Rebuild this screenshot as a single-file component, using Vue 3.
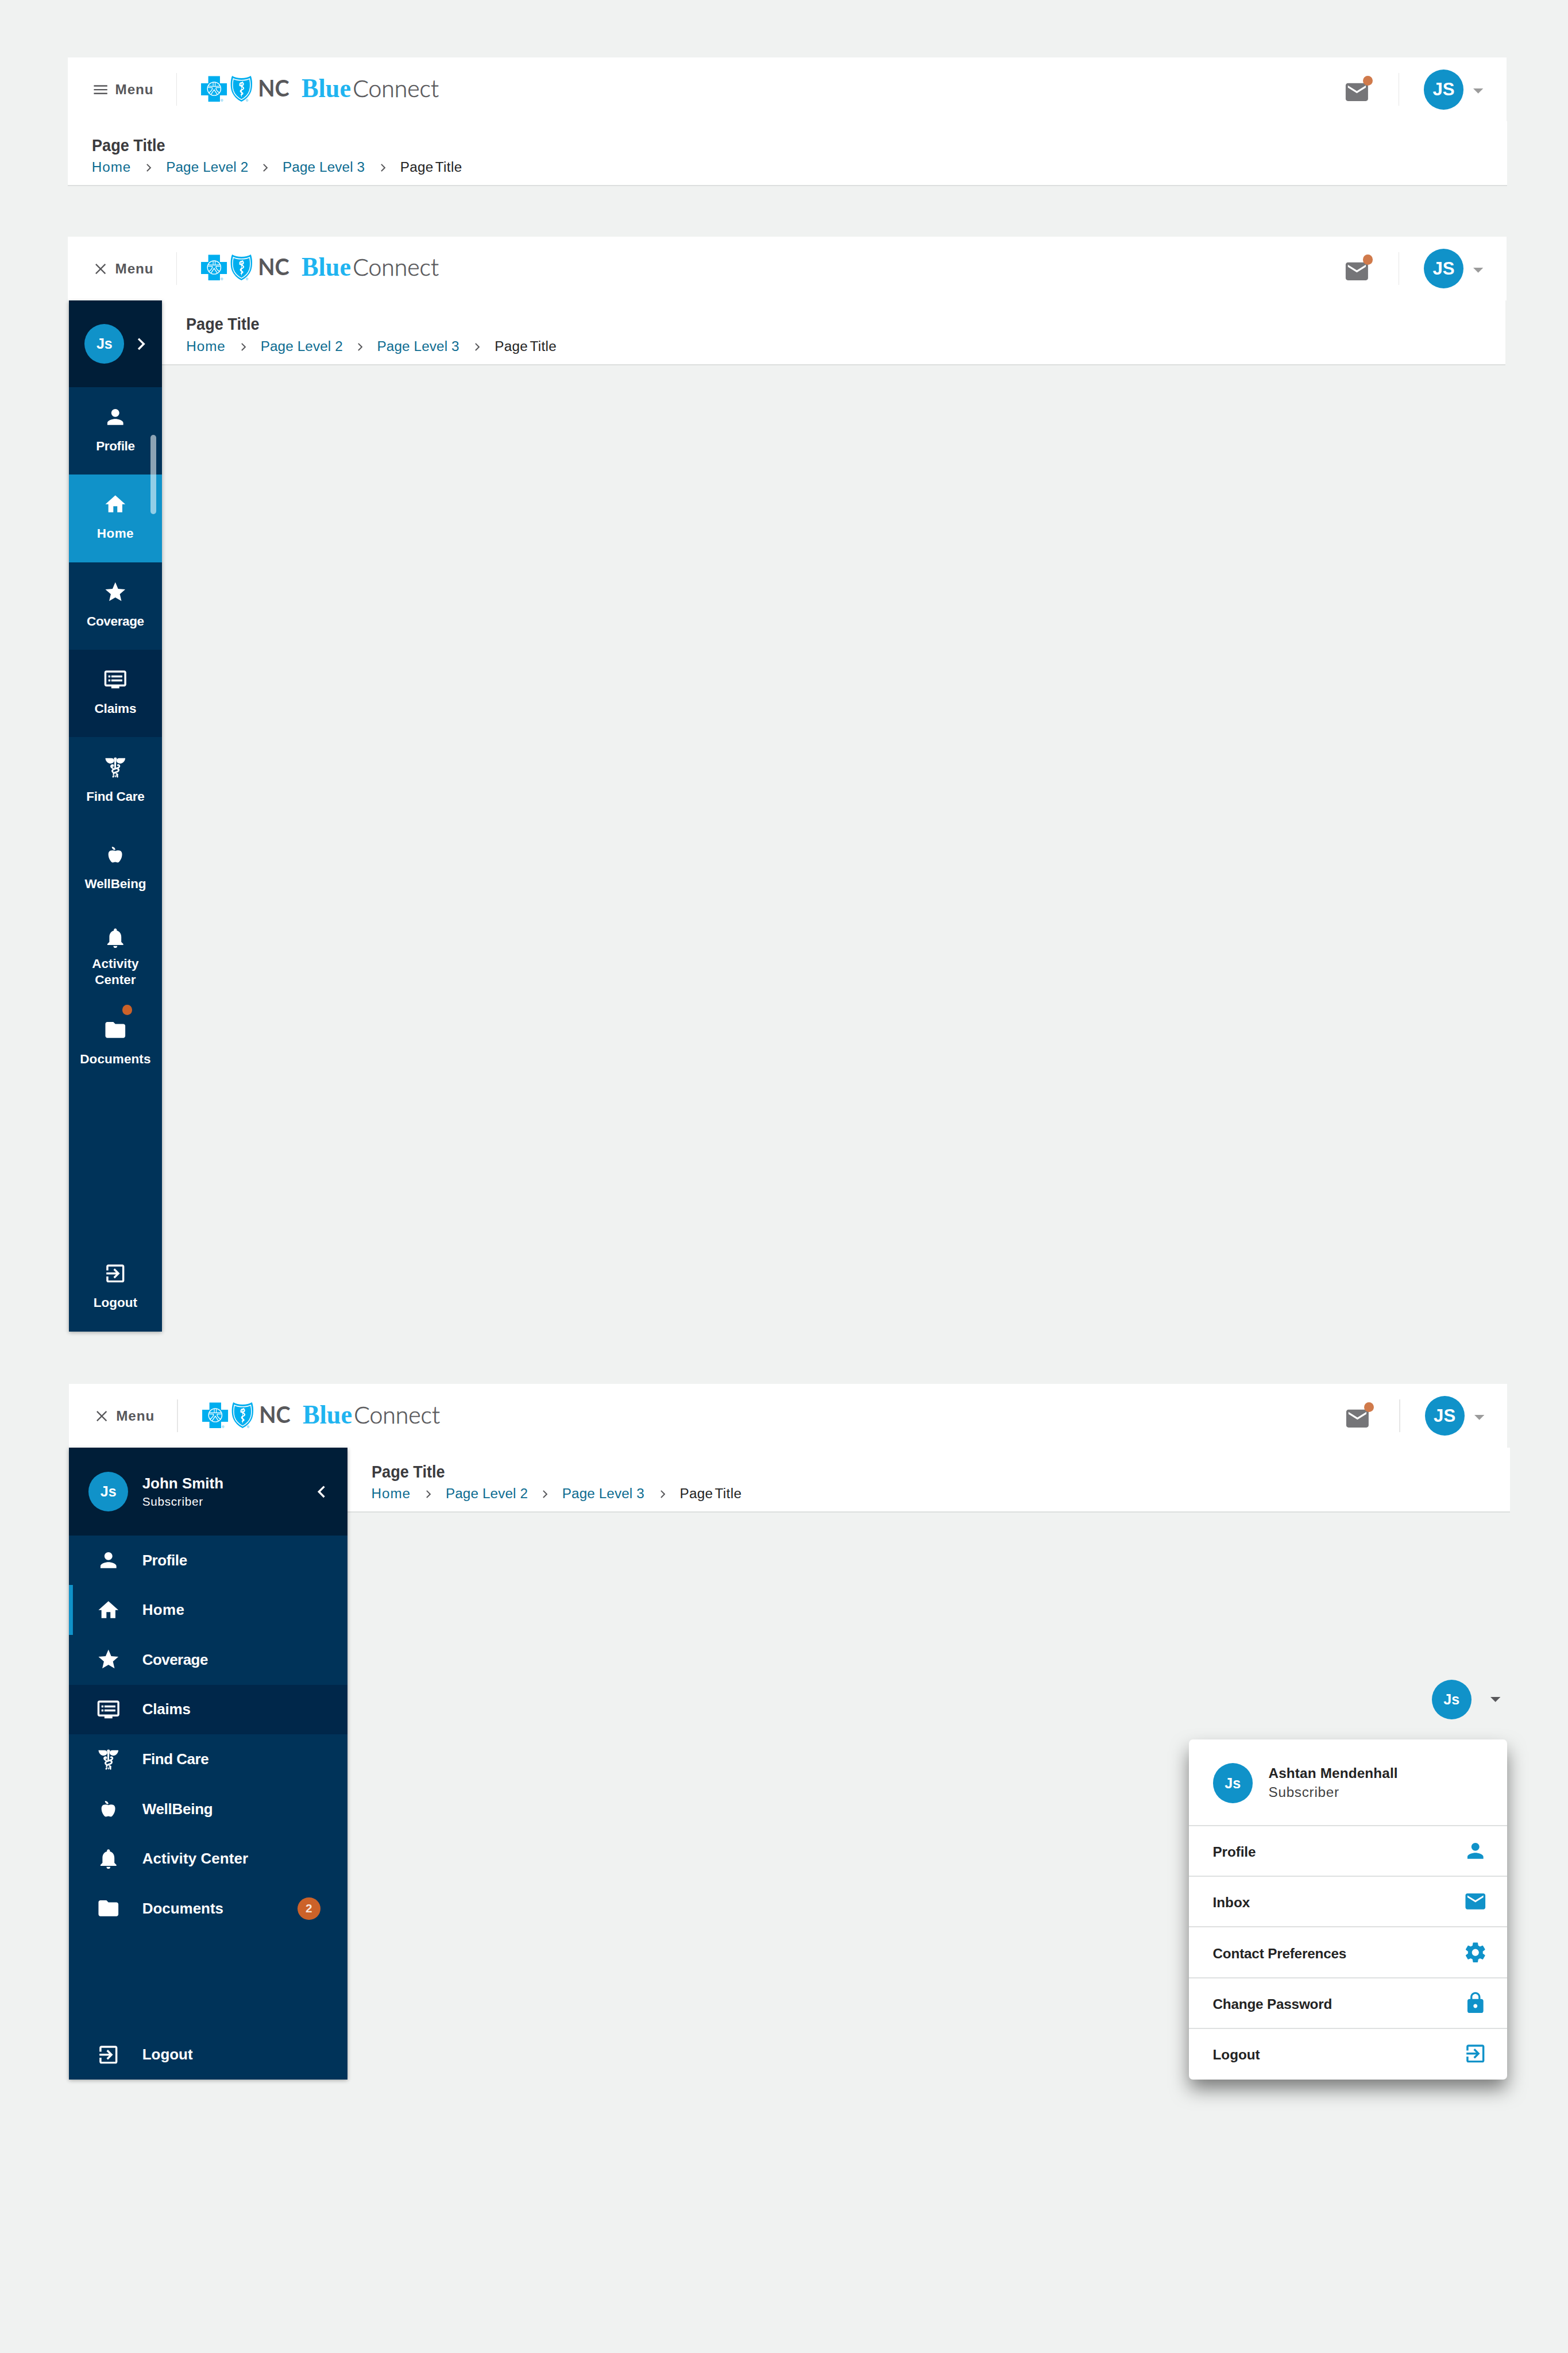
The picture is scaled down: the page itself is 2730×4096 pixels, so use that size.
<script setup>
import { h } from 'vue'

const paths = {
  person: 'M12 12c2.21 0 4-1.79 4-4s-1.79-4-4-4-4 1.79-4 4 1.79 4 4 4zm0 2c-2.67 0-8 1.34-8 4v2h16v-2c0-2.66-5.33-4-8-4z',
  home: 'M10 20v-6h4v6h5v-8h3L12 3 2 12h3v8z',
  star: 'M12 17.27L18.18 21l-1.64-7.03L22 9.24l-7.19-.61L12 2 9.19 8.63 2 9.24l5.46 4.73L5.82 21z',
  claims: 'M21 3H3c-1.1 0-2 .9-2 2v12c0 1.1.9 2 2 2h5v2h8v-2h5c1.1 0 2-.9 2-2V5c0-1.1-.9-2-2-2zm0 14H3V5h18v12zm-2-9H8v2h11V8zm0 4H8v2h11v-2zM7 8H5v2h2V8zm0 4H5v2h2v-2z',
  apple: 'M8.5 4c1.9 0 3.500 1.200 3.500 3.200-1.800.1-3.400-1.200-3.500-3.200zM12 8.300c1.600-.8 3.300-.9 4.700-.3 1.500.7 2.100 2 2.100 3.700 0 3.200-1.700 6.500-3.500 8-1.100.6-2.300-.3-3.400-.3s-2.300.9-3.400.3C6.700 18.200 5 14.900 5 11.700c0-1.700.6-3 2.100-3.700 1.500-.6 3.200-.5 4.900.3z',
  bell: 'M12 22c1.100 0 2-.9 2-2h-4c0 1.100.9 2 2 2zm6-6v-5c0-3.070-1.640-5.640-4.500-6.320V4c0-.83-.67-1.500-1.500-1.500s-1.500.67-1.500 1.500v.68C7.630 5.360 6 7.920 6 11v5l-2 2v1h16v-1l-2-2z',
  folder: 'M10 4H4c-1.100 0-2 .9-2 2v12c0 1.100.9 2 2 2h16c1.100 0 2-.9 2-2V8c0-1.100-.9-2-2-2h-8l-2-2z',
  logout: 'M10.090 15.590L11.500 17l5-5-5-5-1.410 1.410L12.670 11H3v2h9.670l-2.580 2.590zM19 3H5c-1.110 0-2 .9-2 2v4h2V5h14v14H5v-4H3v4c0 1.100.89 2 2 2h14c1.100 0 2-.9 2-2V5c0-1.100-.9-2-2-2z',
  mail: 'M20 4H4c-1.100 0-2 .9-2 2v12c0 1.100.9 2 2 2h16c1.100 0 2-.9 2-2V6c0-1.100-.9-2-2-2zm0 4l-8 5-8-5V6l8 5 8-5v2z',
  gear: 'M19.430 12.980c.04-.32.070-.64.070-.98s-.03-.66-.07-.98l2.110-1.650c.19-.15.24-.42.120-.64l-2-3.460c-.12-.22-.39-.3-.61-.22l-2.490 1c-.52-.4-1.080-.73-1.690-.98l-.38-2.650C14.460 2.180 14.250 2 14 2h-4c-.25 0-.46.18-.49.42l-.38 2.650c-.61.25-1.170.59-1.690.98l-2.490-1c-.23-.09-.49 0-.61.22l-2 3.460c-.13.22-.07.49.12.64l2.110 1.650c-.04.32-.07.65-.07.98s.03.66.07.98l-2.110 1.650c-.19.15-.24.42-.12.64l2 3.460c.12.22.39.3.61.22l2.490-1c.52.4 1.080.73 1.690.98l.38 2.650c.03.24.24.42.49.42h4c.25 0 .46-.18.49-.42l.38-2.650c.61-.25 1.170-.59 1.690-.98l2.490 1c.23.09.49 0 .61-.22l2-3.460c.12-.22.070-.49-.12-.64l-2.110-1.650zM12 15.500c-1.930 0-3.500-1.570-3.500-3.500s1.570-3.500 3.500-3.500 3.500 1.570 3.500 3.500-1.570 3.500-3.500 3.500z',
  lock: 'M18 8h-1V6c0-2.760-2.240-5-5-5S7 3.240 7 6v2H6c-1.100 0-2 .9-2 2v10c0 1.100.9 2 2 2h12c1.100 0 2-.9 2-2V10c0-1.100-.9-2-2-2zm-6 9c-1.100 0-2-.9-2-2s.9-2 2-2 2 .9 2 2-.9 2-2 2zm3.100-9H8.900V6c0-1.710 1.390-3.100 3.100-3.100s3.100 1.390 3.100 3.100v2z',
  left: 'M15.410 7.410L14 6l-6 6 6 6 1.410-1.410L10.830 12z',
  right: 'M10 6L8.590 7.410 13.170 12l-4.580 4.590L10 18l6-6z',
}

// Winged staff with two intertwined snakes, in the same 24-unit box
const caduceus = [
  h('path', { d: 'M2 2.700h6c1.700 0 2.700 1 3 2.800-.5 1.700-2.100 2.700-4 2.700C4.400 8 2.200 5.700 2 2.700zM22 2.700h-6c-1.700 0-2.700 1-3 2.800.5 1.700 2.100 2.700 4 2.700 2.600-.2 4.800-2.500 5-5.500z' }),
  h('circle', { cx: 12, cy: 3.5, r: 1.5 }),
  h('path', { d: 'M11 4h2l-.4 8.600-1.600.4zM11.300 16.300h1.400l-.2 1.600-1.100.3zM11.500 20h1v2h-1z' }),
  h('path', {
    d: 'M9.500 10.800c.9-.9-.2-1.500-1-1-1.300.8-.6 2.700.9 3M14.500 9.700c1-.3 1.700.2 1.600 1.200-.2 2.700-7.100 2-7.200 4.700 0 .6.300 1 .8 1.300M14.200 13.300c1.700.4 1.600 2.600-.6 3.200-1.900.6-3.500.8-3.400 2.300M13.100 18.500c1.400.3 1.400 1.300.5 1.800M10.300 20.600c-.5.300-.6.500-.5.900M13.600 20.600c.5.300.6.500.5.900',
    fill: 'none', stroke: 'currentColor', 'stroke-width': 1.6, 'stroke-linecap': 'round',
  }),
]

const Icon = (props) =>
  h('svg', { viewBox: '0 0 24 24', fill: 'currentColor', width: props.size || 48, height: props.size || 48 },
    props.name === 'caduceus' ? caduceus : [h('path', { d: paths[props.name] })])
Icon.props = ['name', 'size']

const nav = [
  { icon: 'person', label: 'Profile', short: -0.45, wide: -0.45 },
  { icon: 'home', label: 'Home', short: 0.5, wide: 0.4, current: true },
  { icon: 'star', label: 'Coverage', short: -0.4, wide: -0.6 },
  { icon: 'claims', label: 'Claims', short: -0.2, wide: -0.2, hover: true },
  { icon: 'caduceus', label: 'Find Care', short: -0.34, wide: -0.55 },
  { icon: 'apple', label: 'WellBeing', short: -0.2, wide: -0.3 },
  { icon: 'bell', label: 'Activity Center', short: 0, wide: 0.1, wraps: true },
  { icon: 'folder', label: 'Documents', short: 0.1, wide: 0, count: 2 },
]
const account = [
  { icon: 'person', label: 'Profile', track: -0.1 },
  { icon: 'mail', label: 'Inbox', track: 0 },
  { icon: 'gear', label: 'Contact Preferences', track: -0.2 },
  { icon: 'lock', label: 'Change Password', track: -0.2 },
  { icon: 'logout', label: 'Logout', track: 0 },
]
const panels = [
  { id: 'closed', open: false },
  { id: 'rail', open: true },
  { id: 'drawer', open: true },
]
</script>

<template>
  <main class="board">
    <section v-for="p in panels" :key="p.id" class="panel" :class="p.id">
      <header class="topbar">
        <div class="menu">
          <svg v-if="p.open" class="menu-icon" viewBox="0 0 28 28">
            <path d="M4.500 4.500l19 19M23.500 4.500l-19 19" stroke="currentColor" stroke-width="2.600" />
          </svg>
          <svg v-else class="menu-icon" viewBox="0 0 28 28">
            <path d="M.5 6.300h27M.5 14h27M.5 21.700h27" stroke="currentColor" stroke-width="2.800" />
          </svg>
          <span>Menu</span>
        </div>
        <i class="rule"></i>
        <svg class="logo" viewBox="0 0 484 60" width="484" height="60">
          <g fill="#00aeef">
            <path d="M14.500.7H38V15h14v24.300H38V52H14.500V39.300H0V15h14.500z" />
            <path d="M62.500 0c9 6 28.500 6 37.500 0 3.600 8 3.600 23 .6 31.500C97 41 89.500 48 81.200 52c-8.300-4-15.800-11-19.400-20.500-3-8.500-3-23.500.7-31.500z" />
          </g>
          <g fill="none" stroke="#fff">
            <circle cx="26.300" cy="26" r="13.400" stroke-width="1.700" />
            <path d="M13.800 20.300c3 .8 6 .9 9 .9h7c3 0 6-.1 9-.9M14 23.500l8.500.3c.8 3-.5 6-7.300 10.700M38.600 23.500l-8.500.3c-.8 3 .5 6 7.300 10.700M19.800 37.600l6.500-9.600 6.500 9.600" stroke-width="1.500" />
            <path d="M24.300 13.500v7M28.300 13.500v7" stroke-width="1.300" />
            <path d="M64.800 5.800c9 4.300 24 4.300 32.800 0 1.800 8 1.900 17 .1 23.700C95 38 88.600 44 81.200 47.700 73.800 44 67.400 38 64.700 29.500 62.900 22.800 63 13.800 64.800 5.800z" stroke-width="1.700" />
            <path d="M77 19c2.500 1.700 8 .8 8-2.600 0-3.600-6.500-3.400-7 .6-.5 4.500 8 4 7.500 8.300-.4 3.300-6.500 2.400-6.200 5.700.3 2.700 5 2.300 4.500 4.700-.4 1.900-3.400 1.500-3.200 3.300" stroke-width="2.500" />
            <path d="M81.300 14v28" stroke-width="1.100" />
            <path d="M79.500 14.500l5-2.500" stroke-width="1.600" />
          </g>
          <g class="marks">
            <text x="39.300" y="52">®</text>
            <text x="89.800" y="52">®</text>
          </g>
          <text class="nc" x="114.500" y="42" textLength="63" lengthAdjust="spacingAndGlyphs">NC</text>
          <text class="blue" x="202" y="43" textLength="99.500" lengthAdjust="spacingAndGlyphs">Blue</text>
          <text class="connect" x="305" y="43" textLength="173" lengthAdjust="spacingAndGlyphs">Connect</text>
        </svg>
        <div class="tools">
          <div class="mail">
            <Icon name="mail" size="54" />
            <b class="dot"></b>
          </div>
          <i class="rule"></i>
          <div class="avatar caps">JS</div>
          <svg class="caret" viewBox="0 0 20 10" width="20" height="10"><path d="M0 0h20L10 10z" fill="currentColor" /></svg>
        </div>
      </header>

      <div class="body">
        <aside v-if="p.id === 'rail'" class="rail">
          <div class="rail-head">
            <div class="avatar">Js</div>
            <Icon name="right" />
          </div>
          <div
            v-for="n in nav" :key="n.label" class="rail-item"
            :class="{ current: n.current, hover: n.hover, wraps: n.wraps }"
          >
            <Icon :name="n.icon" />
            <span :style="{ letterSpacing: n.short + 'px' }">{{ n.label }}</span>
            <b v-if="n.count" class="dot"></b>
          </div>
          <div class="rail-item last">
            <Icon name="logout" />
            <span>Logout</span>
          </div>
          <i class="thumb"></i>
        </aside>

        <aside v-if="p.id === 'drawer'" class="drawer">
          <div class="drawer-head">
            <div class="avatar">Js</div>
            <div class="who">
              <strong>John Smith</strong>
              <small>Subscriber</small>
            </div>
            <Icon name="left" />
          </div>
          <div
            v-for="n in nav" :key="n.label" class="drawer-item"
            :class="{ current: n.current, hover: n.hover }"
          >
            <Icon :name="n.icon" />
            <span :style="{ letterSpacing: n.wide + 'px' }">{{ n.label }}</span>
            <b v-if="n.count" class="count">{{ n.count }}</b>
          </div>
          <div class="drawer-item last">
            <Icon name="logout" />
            <span>Logout</span>
          </div>
        </aside>

        <div class="content">
          <div class="pagebar">
            <h1>Page Title</h1>
            <nav class="crumbs">
              <span class="c1"><a>Home</a><svg class="sep" viewBox="0 0 10 16"><path d="M1 1l7 7-7 7" /></svg></span>
              <span class="c2"><a>Page Level 2</a><svg class="sep" viewBox="0 0 10 16"><path d="M1 1l7 7-7 7" /></svg></span>
              <span class="c3"><a>Page Level 3</a><svg class="sep" viewBox="0 0 10 16"><path d="M1 1l7 7-7 7" /></svg></span>
              <span class="here">Page Title</span>
            </nav>
          </div>

          <div v-if="p.id === 'drawer'" class="account">
            <div class="trigger">
              <div class="avatar">Js</div>
              <svg class="caret" viewBox="0 0 20 10" width="20" height="10"><path d="M0 0h20L10 10z" fill="currentColor" /></svg>
            </div>
            <div class="card">
              <div class="card-head">
                <div class="avatar">Js</div>
                <div class="owner">
                  <strong>Ashtan Mendenhall</strong>
                  <small>Subscriber</small>
                </div>
              </div>
              <div v-for="a in account" :key="a.label" class="card-row">
                <span :style="{ letterSpacing: a.track + 'px' }">{{ a.label }}</span>
                <Icon :name="a.icon" />
              </div>
            </div>
          </div>
        </div>
      </div>
    </section>
  </main>
</template>

<style>
html,
body {
  background: #f0f2f1;
  overflow: hidden;
}
</style>

<style scoped>
.board,
.board * {
  box-sizing: border-box;
}
.board {
  zoom: 0.8661;
  width: 3153px;
  height: 4730px;
  padding: 116px 0 0 136px;
  background: #f0f2f1;
  font-family: "Liberation Sans", Arial, sans-serif;
  overflow: hidden;
}
.board svg {
  display: block;
  flex: none;
}
.panel.rail {
  margin-top: 102px;
}
.panel.drawer {
  margin-top: 106px;
  margin-left: 2px;
}

/* top bar */
.topbar {
  display: flex;
  align-items: center;
  width: 2892px;
  height: 128px;
  padding-right: 46px;
  background: #fff;
}
.menu {
  display: flex;
  align-items: center;
  gap: 15.5px;
  width: 218px;
  padding-left: 52px;
  color: #58585b;
  font-size: 28px;
  font-weight: 700;
  letter-spacing: 1.1px;
}
.menu-icon {
  width: 28px;
  height: 28px;
}
.rule {
  width: 2px;
  height: 66px;
  background: #e6e6e6;
}
.board .logo {
  margin-left: 48px;
  margin-top: 4px;
  overflow: visible;
}
.marks {
  fill: #00aeef;
  font-size: 7px;
}
.nc {
  fill: #58585b;
  font: 700 46px Lato, sans-serif;
}
.blue {
  fill: #1fb4f0;
  font: 700 53px "Liberation Serif", serif;
}
.connect {
  fill: #58585b;
  stroke: #58585b;
  stroke-width: 0.7px;
  font: 300 48px Lato, sans-serif;
}
.tools {
  display: flex;
  align-items: center;
  margin-left: auto;
}
.mail {
  position: relative;
  margin: 10px 57px 0 0;
  color: #757578;
}
.dot {
  position: absolute;
  width: 20px;
  height: 20px;
  border-radius: 50%;
  background: #cc6229;
}
.mail .dot {
  left: 40px;
  top: -6px;
  background: #d07a4b;
}
.avatar {
  display: flex;
  align-items: center;
  justify-content: center;
  flex: none;
  width: 80px;
  height: 80px;
  padding-top: 1px;
  border-radius: 50%;
  background: #1092c9;
  color: #fff;
  font-size: 29px;
  font-weight: 700;
}
.avatar.caps {
  margin-left: 49px;
  font-size: 36px;
}
.tools .caret {
  margin: 6px 0 0 20px;
  color: #9b9b9b;
}

/* page bar */
.body {
  display: flex;
}
.content {
  flex: none;
}
.pagebar {
  height: 130px;
  padding: 28px 0 0 48.5px;
  background: #fff;
  border-bottom: 2.4px solid #dcdfde;
}
.closed .pagebar {
  width: 2894px;
}
.rail .pagebar {
  width: 2700px;
}
.drawer .pagebar {
  width: 2338px;
}
h1 {
  width: max-content;
  margin: 0;
  color: #3b3b3e;
  font-size: 35px;
  line-height: 40px;
  font-weight: 700;
  transform: scaleX(0.895);
  transform-origin: 0 0;
}
.crumbs {
  display: flex;
  margin-top: 6px;
  font-size: 28px;
  line-height: 36px;
  letter-spacing: 0.15px;
  white-space: nowrap;
  color: #0d6c91;
}
.crumbs span {
  display: flex;
  justify-content: space-between;
}
.crumbs .c1 {
  width: 149.4px;
  letter-spacing: 1.1px;
}
.c2 {
  width: 234.2px;
}
.c3 {
  width: 236.3px;
}
.sep {
  width: 10px;
  height: 16px;
  margin: 11px 29px 0 0;
  fill: none;
  stroke: #58585b;
  stroke-width: 2.3px;
}
.crumbs .here {
  color: #232323;
  letter-spacing: 0.4px;
  word-spacing: -4px;
}

/* narrow rail */
aside {
  position: relative;
  display: flex;
  flex-direction: column;
  flex: none;
  background: #003359;
  color: #fff;
  font-weight: 700;
  box-shadow: 0 2px 8px rgba(0, 0, 0, 0.32);
}
aside.rail {
  width: 188px;
  height: 2072px;
  margin-left: 2px;
}
.rail-head {
  display: flex;
  align-items: center;
  height: 174px;
  padding-left: 32px;
  background: #001e38;
}
.rail-head svg {
  margin-left: 10px;
}
.rail-item {
  position: relative;
  display: flex;
  flex-direction: column;
  align-items: center;
  gap: 19px;
  height: 176px;
  padding-top: 36px;
  font-size: 26px;
  line-height: 33px;
  text-align: center;
}
.rail-item.wraps {
  padding: 27px 30px 0;
  gap: 12px;
  line-height: 32.500px;
}
.rail-item.current {
  background: #1092c9;
}
.hover {
  background: #00274a;
}
.rail-item .dot {
  left: 108px;
  top: 10px;
}
.last {
  margin-top: auto;
}
.thumb {
  position: absolute;
  left: 164px;
  top: 270px;
  width: 12px;
  height: 160px;
  border-radius: 6px;
  background: rgba(255, 255, 255, 0.55);
}

/* wide drawer */
aside.drawer {
  width: 560px;
  height: 1270px;
}
.drawer-head {
  display: flex;
  align-items: center;
  height: 176px;
  padding: 0 28px 0 40px;
  background: #001e38;
}
.who {
  display: flex;
  flex-direction: column;
  gap: 1px;
  flex: 1;
  margin-left: 28px;
  padding-top: 2px;
}
.who strong {
  font-size: 30px;
  line-height: 36px;
}
.who small {
  font-size: 24px;
  line-height: 32px;
  font-weight: 400;
  letter-spacing: 0.8px;
}
.drawer-item {
  display: flex;
  align-items: center;
  height: 100px;
  padding: 0 54px 0 56px;
  font-size: 30px;
}
.drawer-item span {
  flex: 1;
  margin-left: 44px;
}
.drawer-item.current {
  box-shadow: inset 8px 0 #1092c9;
}
.count {
  width: 46px;
  height: 45px;
  border-radius: 50%;
  background: #cc6229;
  color: #f9e5da;
  font-size: 24px;
  line-height: 45px;
  text-align: center;
}

/* account menu */
.account {
  display: flex;
  flex-direction: column;
  align-items: flex-end;
  width: 2332px;
  padding-top: 336px;
}
.trigger {
  display: flex;
  align-items: center;
  gap: 38px;
  padding-right: 14px;
  color: #58585b;
}
.card {
  width: 640px;
  height: 684px;
  margin-top: 40px;
  border-radius: 8px;
  background: #fff;
  color: #232323;
  font-size: 28px;
  box-shadow: 0 20px 38px -2px rgba(0, 0, 0, 0.5);
}
.card-head {
  display: flex;
  align-items: center;
  height: 172px;
  padding: 4px 0 0 48px;
}
.owner {
  display: flex;
  flex-direction: column;
  margin-left: 32px;
  line-height: 38px;
}
.owner strong {
  letter-spacing: 0.2px;
}
.owner small {
  font-size: 28px;
  letter-spacing: 0.85px;
  color: #3f3f41;
}
.card-row {
  display: flex;
  align-items: center;
  justify-content: space-between;
  height: 102px;
  padding: 0 40px 0 48px;
  border-top: 2.4px solid #dee0e0;
  font-weight: 700;
}
.card-row span {
  padding-top: 5px;
}
.card-row svg {
  color: #1092c9;
}
</style>
